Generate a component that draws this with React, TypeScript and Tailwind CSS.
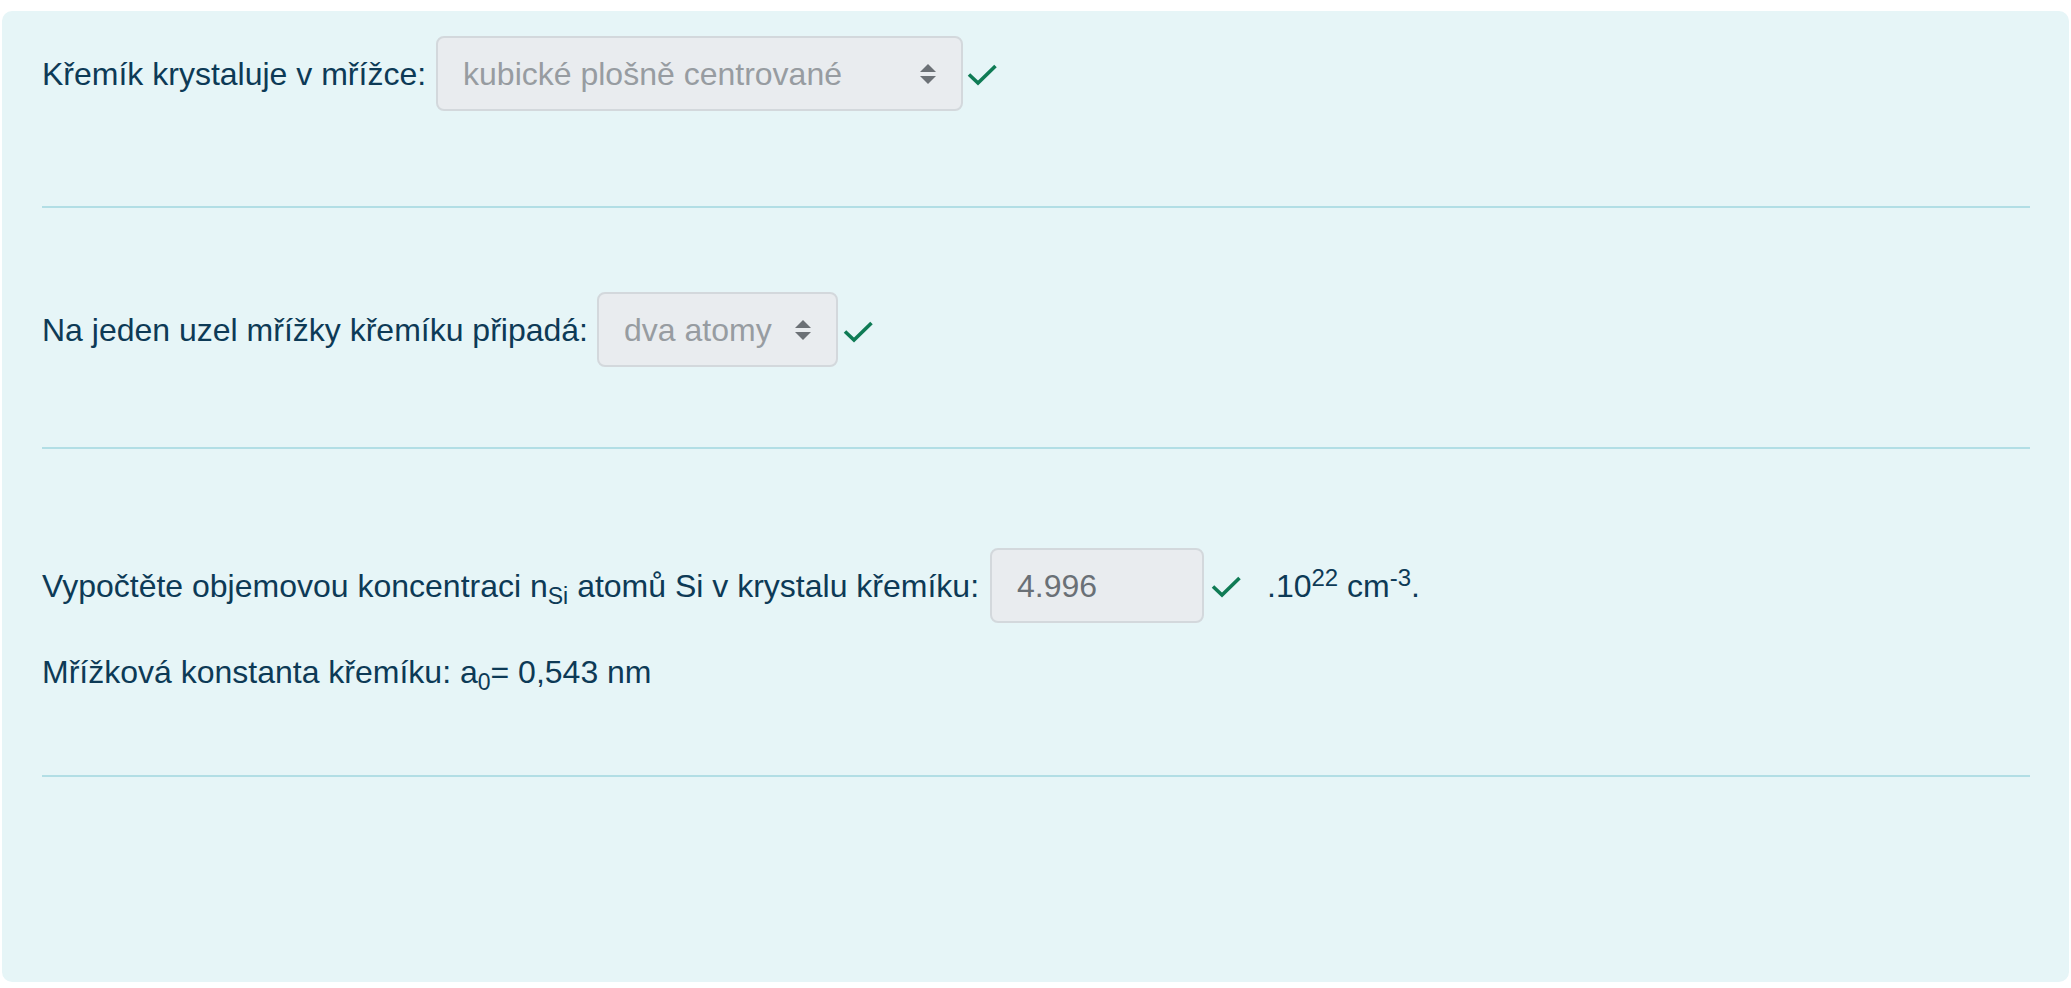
import React from "react";

const Check = () => (
  <svg width="30" height="22" viewBox="0 0 30 22" className="shrink-0">
    <polyline
      points="2,10.5 11,19 28.5,2"
      fill="none"
      stroke="#0f7b55"
      strokeWidth="3.6"
      strokeLinecap="butt"
      strokeLinejoin="miter"
    />
  </svg>
);

const Arrows = () => (
  <svg width="16" height="20" viewBox="0 0 4 5" className="shrink-0">
    <path fill="#6c7176" d="M2 0L0 2h4zm0 5L0 3h4z" />
  </svg>
);

const Select = ({ value, width }: { value: string; width: string }) => (
  <div
    className={`ml-[9px] h-[75px] ${width} shrink-0 flex items-center justify-between pl-[25px] pr-[25px] bg-[#e9ecef] border-2 border-[#d3d8dc] rounded-[8px] text-[#979ca1]`}
  >
    <span className="whitespace-nowrap">{value}</span>
    <Arrows />
  </div>
);

const Hr = ({ mt }: { mt: string }) => <div className={`${mt} h-[2px] bg-[#b2dee5]`} />;

export default function App() {
  return (
    <div
      className="min-h-screen bg-white pt-[11px] px-[2px]"
      style={{ fontFamily: '"Liberation Sans", Arial, sans-serif' }}
    >
      <div className="bg-[#e6f5f7] rounded-[10px] h-[971px] pt-[25px] pl-[40px] pr-[39px] text-[32px] leading-[48px] text-[#0d3a56]">
        <div className="flex items-center h-[75px]">
          <span className="whitespace-nowrap">Křemík krystaluje v mřížce:</span>
          <div className="w-[1px]" />
          <Select value="kubické plošně centrované" width="w-[527px]" />
          <span className="ml-[4px] mt-[2px]">
            <Check />
          </span>
        </div>

        <Hr mt="mt-[95px]" />

        <div className="mt-[84px] flex items-center h-[75px]">
          <span className="whitespace-nowrap">Na jeden uzel mřížky křemíku připadá:</span>
          <Select value="dva atomy" width="w-[241px]" />
          <span className="ml-[5px] mt-[4px]">
            <Check />
          </span>
        </div>

        <Hr mt="mt-[80px]" />

        <div className="mt-[99px] flex items-center h-[75px]">
          <span className="whitespace-nowrap">
            Vypočtěte objemovou koncentraci n
            <span className="relative top-[7px] text-[23px] leading-[0]">Si</span> atomů Si v krystalu křemíku:
          </span>
          <div className="ml-[11px] h-[75px] w-[214px] shrink-0 flex items-center pl-[25px] bg-[#e9ecef] border-2 border-[#d3d8dc] rounded-[8px] text-[#6a7076]">
            4.996
          </div>
          <span className="ml-[7px] mt-[2px]">
            <Check />
          </span>
          <span className="ml-[26px] whitespace-nowrap">
            .10<span className="relative -top-[11px] text-[24px] leading-[0]">22</span> cm
            <span className="relative -top-[11px] text-[24px] leading-[0]">-3</span>.
          </span>
        </div>

        <div className="mt-[25px] whitespace-nowrap">
          Mřížková konstanta křemíku: a<span className="relative top-[7px] text-[23px] leading-[0]">0</span>= 0,543 nm
        </div>

        <Hr mt="mt-[79px]" />
      </div>
    </div>
  );
}
